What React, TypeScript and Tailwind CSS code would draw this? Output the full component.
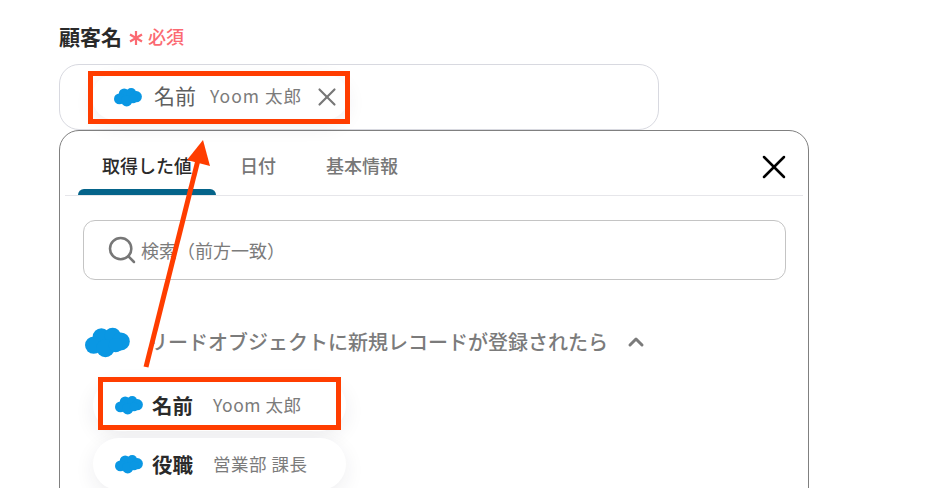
import React from "react";
import { X, ChevronUp, Search } from "lucide-react";

const Cloud = ({ className }: { className: string }) => (
  <svg viewBox="0 0 44 30" className={className} fill="#0a97e3">
    <circle cx="16" cy="10" r="8.5" />
    <circle cx="27" cy="9" r="8" />
    <circle cx="35" cy="14.5" r="8.8" />
    <circle cx="8.5" cy="18" r="8.5" />
    <circle cx="20" cy="21" r="8.8" />
    <circle cx="30" cy="18" r="7" />
  </svg>
);

const ValueChip = ({ name, value, first }: { name: string; value: string; first?: boolean }) => (
  <div
    className={`flex items-center h-[52px] w-[253px] pl-[22px] rounded-full bg-white shadow-[0_6px_20px_rgba(40,40,70,0.08)] ${
      first ? "" : "mt-[7px]"
    }`}
  >
    <Cloud className="w-[28px] h-[20px]" />
    <span className="ml-[9px] text-[20.5px] font-bold text-[#2a2a2a] leading-none">{name}</span>
    <span className="ml-[20px] text-[17.5px] tracking-[0.03em] text-[#7b7b7b] leading-none">{value}</span>
  </div>
);

const Tab = ({ label, active, className }: { label: string; active?: boolean; className: string }) => (
  <div
    className={`relative flex items-center justify-center h-full pt-[4px] text-[18px] font-medium ${className} ${
      active ? "text-[#2a2a2a]" : "text-[#777777]"
    }`}
  >
    {label}
    {active && <div className="absolute bottom-0 inset-x-0 h-[6px] rounded-t-[6px] bg-[#05648a]" />}
  </div>
);

export default function App() {
  return (
    <div
      className="relative w-[938px] h-[488px] overflow-hidden bg-white pl-[59px] pt-[23px]"
      style={{ fontFamily: '"Noto Sans CJK JP", "Noto Sans", sans-serif' }}
    >
      <div className="flex items-center h-[26px]">
        <span className="text-[21px] font-bold text-[#2a2a2a] leading-none">顧客名</span>
        <svg viewBox="0 0 14 14" className="ml-[7px] mt-[3px] w-[14px] h-[14px]" stroke="#fb6a72" strokeWidth="2.2">
          <line x1="7" y1="0" x2="7" y2="14" />
          <line x1="1" y1="3.5" x2="13" y2="10.5" />
          <line x1="13" y1="3.5" x2="1" y2="10.5" />
        </svg>
        <span className="ml-[5px] text-[18px] font-medium text-[#fb6a72] leading-none">必須</span>
      </div>

      <div className="mt-[15px] flex items-center w-[600px] h-[66px] pl-[32px] rounded-[20px] border border-[#d8d9e0] bg-white">
        <div className="flex items-center h-[46px] pl-[22px] pr-[6px] rounded-full bg-white shadow-[0_6px_20px_rgba(40,40,70,0.07)]">
          <Cloud className="w-[28px] h-[20px]" />
          <span className="ml-[12px] mb-[3px] text-[21px] text-[#5f5f5f] leading-none">名前</span>
          <span className="ml-[14px] mb-[2px] text-[17.5px] tracking-[0.06em] text-[#7b7b7b] leading-none">Yoom 太郎</span>
          <X className="ml-[10px] w-[30px] h-[30px] text-[#777777]" strokeWidth={1.7} />
        </div>
      </div>

      <div className="w-[750px] h-[400px] rounded-t-[20px] border border-[#808080] bg-white px-[5px]">
        <div className="flex items-center h-[65px] border-b border-[#e6e6ea] pl-[13px] pr-[9px]">
          <Tab label="取得した値" active className="w-[138px]" />
          <Tab label="日付" className="w-[84px]" />
          <Tab label="基本情報" className="w-[90px] ml-[17px]" />
          <X className="ml-auto mt-[7px] w-[40px] h-[40px] text-black" strokeWidth={1.5} />
        </div>

        <div className="ml-[18px] mr-[17px] mt-[24px] flex items-center h-[60px] rounded-[12px] border border-[#c4c4c4] pl-[22px]">
          <Search className="w-[32px] h-[32px] text-[#777777]" strokeWidth={1.9} />
          <span className="ml-[3px] text-[18px] text-[#7b7b7b] leading-none">検索（前方一致）</span>
        </div>

        <div className="mt-[44px] ml-[20px] flex items-center h-[36px]">
          <Cloud className="w-[45px] h-[32px]" />
          <span className="ml-[18px] text-[20px] font-medium text-[#7b7b7b] leading-none">リードオブジェクトに新規レコードが登録されたら</span>
          <ChevronUp className="ml-[16px] w-[24px] h-[24px] text-[#7b7b7b]" strokeWidth={3} />
        </div>

        <div className="mt-[19px] ml-[28px]">
          <ValueChip name="名前" value="Yoom 太郎" first />
          <ValueChip name="役職" value="営業部 課長" />
        </div>
      </div>

      {/* annotations on top of the screenshot */}
      <div className="absolute left-[88px] top-[71px] w-[262px] h-[53px] border-[5px] border-[#ff3d00]" />
      <div className="absolute left-[98px] top-[377px] w-[243px] h-[53px] border-[5px] border-[#ff3d00]" />
      <svg className="absolute left-0 top-0 w-[938px] h-[488px] pointer-events-none" viewBox="0 0 938 488">
        <line x1="146" y1="367" x2="198" y2="160" stroke="#ff3d00" strokeWidth="5" />
        <polygon points="203,140 187,160 210,166" fill="#ff3d00" />
      </svg>
    </div>
  );
}
